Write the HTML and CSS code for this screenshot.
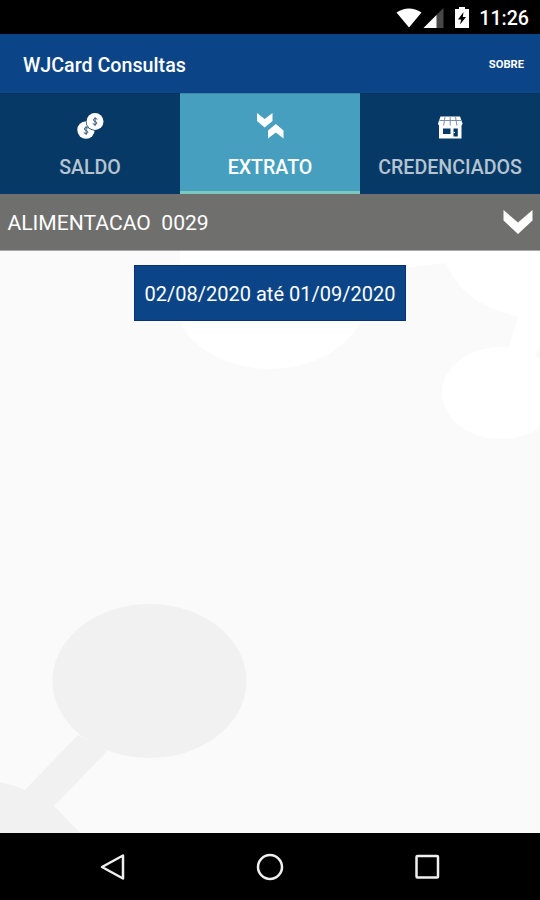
FILE: index.html
```
<!DOCTYPE html>
<html lang="pt-BR">
  <head>
    <meta charset="UTF-8" />
    <meta name="viewport" content="width=device-width, initial-scale=1.0" />
    <title>WJCard Consultas</title>
    <link rel="stylesheet" href="styles.css">
  </head>
  <body>
    <div class="screen">
      <div class="status-bar">
        <svg class="wifi" width="26" height="20" viewBox="0 0 26 20">
          <path d="M0.5 4.5Q13-3.5 25.5 4.5L13 19.5Z" fill="#fff" />
        </svg>
        <svg class="signal" width="21" height="20" viewBox="0 0 21 20">
          <path d="M20.5 0V20H0.5Z" fill="#474747" />
          <path d="M13.5 7V20H0.5Z" fill="#fff" />
        </svg>
        <svg class="battery" width="14" height="21" viewBox="0 0 14 21">
          <path d="M4 0H10V2H14V21H0V2H4Z" fill="#fff" />
          <path d="M8.5 5L3 12.5H6.2L5 17.5L11 10H7.8Z" fill="#000" />
        </svg>
        <span class="clock">11:26</span>
      </div>

      <header class="app-bar">
        <h1>WJCard Consultas</h1>
        <button class="about">SOBRE</button>
      </header>

      <!-- Tabs -->
      <nav class="tabs">
        <button class="tab">
          <svg width="28" height="28" viewBox="0 0 28 28">
            <circle cx="10" cy="17" r="8.7" fill="#fff" />
            <circle cx="19" cy="8.5" r="9.2" fill="#073966" />
            <circle cx="19" cy="8.5" r="8.5" fill="#fff" />
            <g fill="none" stroke="#36597b" stroke-width="1">
              <path d="M21.3 6.2Q18.8 4.6 17.5 6.2Q16.9 8 19.2 8.5Q21.5 9 20.7 10.8Q19.1 12.2 16.7 10.8M19.1 4.2V13" />
              <path d="M12.3 15.2Q9.8 13.6 8.5 15.2Q7.9 17 10.2 17.5Q12.5 18 11.7 19.8Q10.1 21.2 7.7 19.8M10.1 13.2V22" />
            </g>
          </svg>
          <span>SALDO</span>
        </button>
        <button class="tab active">
          <svg width="28" height="28" viewBox="0 0 28 28">
            <path d="M1 0L8.7 6L16.5 0V8L8.7 14.5L1 8Z" fill="#fff" />
            <path d="M12 25.5V17.5L19.8 11L27.5 17.5V25.5L19.8 19.5Z" fill="#fff" />
          </svg>
          <span>EXTRATO</span>
        </button>
        <button class="tab">
          <svg width="28" height="28" viewBox="0 0 28 28">
            <path d="M4.5 3.5H24L26.5 10.5Q26.5 12.8 24 12.8H4.5Q2 12.8 2 10.5Z" fill="#fff" />
            <path d="M3 12H25.5V25.5H3Z" fill="#fff" />
            <path d="M3.5 7.5H25M9 4L7.6 12.5M14.2 4V12.5M19.5 4L20.9 12.5" fill="none" stroke="#7891aa" stroke-width="1" />
            <path d="M7 15.5H14.5V21H7ZM17.5 15.5H21.8V23.5H17.5Z" fill="#073966" />
            <path d="M17.6 19.5H19" stroke="#fff" stroke-width="1" />
          </svg>
          <span>CREDENCIADOS</span>
        </button>
      </nav>

      <div class="account">
        <span class="account-name">ALIMENTACAO&nbsp; 0029</span>
        <svg width="30" height="24" viewBox="0 0 30 24">
          <path d="M0.5 0L15 12.5L29.5 0V10.5L15 24L0.5 10.5Z" fill="#fff" />
        </svg>
      </div>

      <main class="content">
        <svg class="backdrop" width="540" height="582" viewBox="0 251 540 582">
          <ellipse cx="270" cy="293" rx="98" ry="76" fill="#fff" />
          <path d="M180 251H540V345L533 358L508 350L518 317Q462 304 446 263L405 268H180Z" fill="#fff" />
          <ellipse cx="501" cy="393" rx="59" ry="46" fill="#fff" />
          <g fill="#f1f1f1">
            <ellipse cx="149.5" cy="681" rx="97" ry="77" />
            <path d="M78 735L25 790Q13 785 0 782V833H80L54 806L107 751Z" />
          </g>
        </svg>
        <button class="period">02/08/2020 até 01/09/2020</button>
      </main>

      <!-- System navigation -->
      <footer class="nav-bar">
        <svg width="28" height="28" viewBox="0 0 28 28">
          <path d="M24 2.5V25.5L3 14Z" />
        </svg>
        <svg width="28" height="28" viewBox="0 0 28 28">
          <circle cx="14" cy="14" r="12" />
        </svg>
        <svg width="28" height="28" viewBox="0 0 28 28">
          <rect x="3.5" y="3" width="21.5" height="21.5" rx="1" />
        </svg>
      </footer>
    </div>
  </body>
</html>
```
FILE: styles.css
```
body {
  margin: 0;
  font-family: Roboto, "Liberation Sans", sans-serif;
  background-color: #000;
}

button {
  border: none;
  margin: 0;
  padding: 0;
  font-family: inherit;
  color: inherit;
  background: none;
}

.screen {
  display: flex;
  flex-direction: column;
  width: 540px;
  height: 900px;
  overflow: hidden;
}

.status-bar {
  display: flex;
  align-items: center;
  justify-content: flex-end;
  height: 34px;
  padding-right: 11px;
  box-sizing: border-box;
  background-color: #000;
}

.status-bar svg {
  margin-top: 1px;
}

.signal {
  margin-left: 1px;
}

.battery {
  margin-left: 11px;
}

.clock {
  margin-left: 10px;
  padding-top: 3px;
  font-size: 19.6px;
  font-weight: 500;
  color: #fff;
}

.app-bar {
  display: flex;
  align-items: center;
  justify-content: space-between;
  height: 59px;
  padding: 0 16px 0 23px;
  background-color: #0c4587;
  color: #fff;
}

.app-bar h1 {
  margin: 4px 0 0;
  font-size: 19.7px;
  font-weight: 500;
}

.about {
  margin-top: 2px;
  font-size: 11.2px;
  font-weight: 700;
}

.tabs {
  display: grid;
  grid-template-columns: 1fr 1fr 1fr;
  height: 101px;
}

.tab {
  display: flex;
  flex-direction: column;
  align-items: center;
  padding-top: 19px;
  gap: 15px;
  border-top: 1px solid #093361;
  background-color: #073966;
  color: #b5c4d1;
  font-size: 19.6px;
  font-weight: 500;
  line-height: 24px;
}

.tab.active {
  border-top-color: #3c86a8;
  border-bottom: 3px solid #7bc8c0;
  background-color: #469fbf;
  color: #fff;
}

.account {
  display: flex;
  align-items: center;
  justify-content: space-between;
  height: 56px;
  padding: 0 7.5px;
  background-color: #6f6f6e;
  color: #fff;
  border-bottom: 1px solid #a9a9a9;
}

.account-name {
  padding-top: 1px;
  font-size: 21.1px;
}

.content {
  position: relative;
  flex: 1;
  display: flex;
  justify-content: center;
  align-items: flex-start;
  padding-top: 14px;
  background-color: #fafafa;
}

/* decorative shapes behind the list */
.backdrop {
  position: absolute;
  top: 0;
  left: 0;
}

.period {
  position: relative;
  width: 272px;
  height: 56px;
  padding-top: 2px;
  border: 1px solid #073078;
  background-color: #0c4587;
  color: #fff;
  font-size: 20px;
}

.nav-bar {
  display: flex;
  justify-content: center;
  align-items: center;
  gap: 129px;
  height: 67px;
  background-color: #000;
}

.nav-bar svg {
  fill: none;
  stroke: #f0f0f0;
  stroke-width: 2.5;
  stroke-linejoin: round;
}
```
